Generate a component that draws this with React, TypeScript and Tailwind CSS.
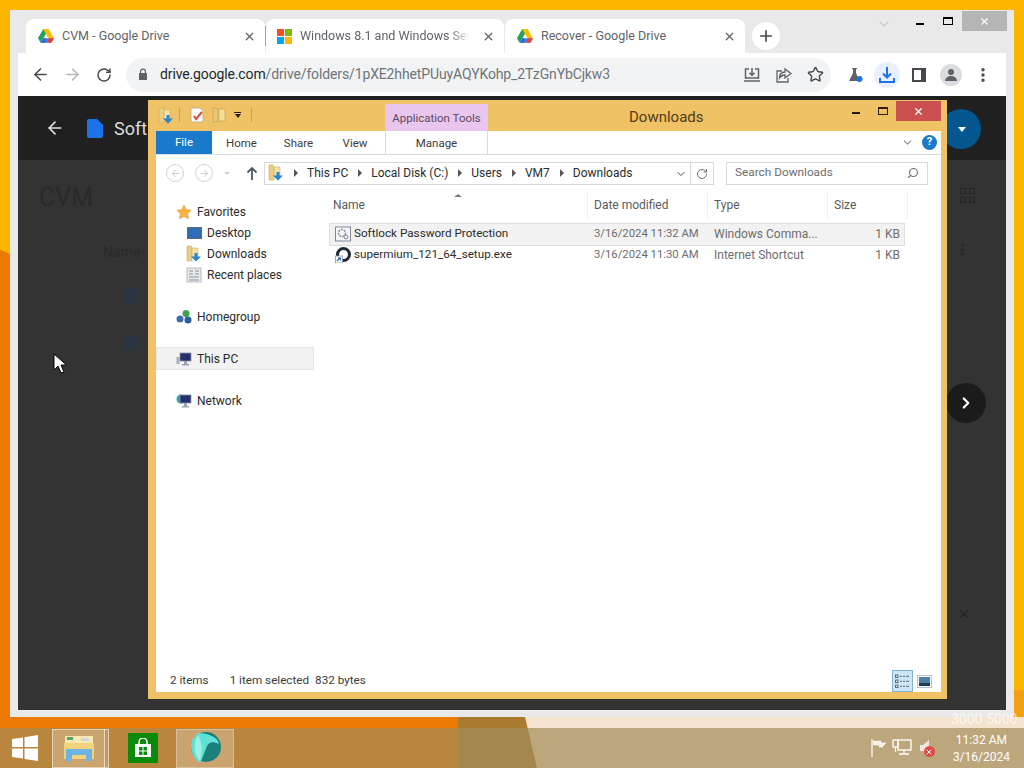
import { ArrowLeft, ArrowRight, ChevronDown, ChevronRight, EllipsisVertical, MoreVertical, Plus, RotateCw, Search, Star, X } from 'lucide-react';

function DriveLogo() {
  return (
    <svg width="16" height="14" viewBox="0 0 16 14" className="shrink-0">
      <path d="M5.3 0h5.4l-2.7 4.7L5.5 9H0.2z" fill="#fbbc04" />
      <path d="M5.3 0L0 9.2l2.6 4.5L8 4.6z" fill="#1ea362" />
      <path d="M10.7 0H5.3L8 4.7l2.6 4.5H16z" fill="#fbbc04" />
      <path d="M2.6 13.8h10.8L16 9.2H5.3z" fill="#4285f4" />
      <path d="M5.3 9.2L2.6 13.8h5.2l-.1-4.6z" fill="#3367d6" />
      <path d="M13.4 13.8L16 9.2h-5.4l-1.5 4.6z" fill="#ea4335" />
    </svg>
  );
}

function MsLogo() {
  return (
    <div className="grid grid-cols-2 gap-[1px] w-[15px] h-[15px] shrink-0">
      <div className="bg-[#f25022]" />
      <div className="bg-[#7fba00]" />
      <div className="bg-[#00a4ef]" />
      <div className="bg-[#ffb900]" />
    </div>
  );
}

function FolderDown() {
  return (
    <svg width="16" height="17" viewBox="0 0 16 17" className="shrink-0">
      <path d="M1 1h4l1 1v14H1z" fill="#e9cf86" stroke="#c9a85a" strokeWidth="0.6" />
      <path d="M6 3h6v9H6z" fill="#f6e3a6" stroke="#cfb26a" strokeWidth="0.6" />
      <path d="M8.500 8h3v3.500H15l-5 5-5-5h3.500z" fill="#2a85cf" />
    </svg>
  );
}

function Tab({ icon, title, textCls, width, pad }: { icon: React.ReactNode; title: string; textCls: string; width: string; pad: string }) {
  return (
    <div className={`flex items-center h-[34px] bg-white rounded-t-lg ${pad} ${width}`}>
      {icon}
      <span className={`ml-2 text-[12.5px] text-[#5f6368] whitespace-nowrap overflow-hidden ${textCls}`}>{title}</span>
      <X size={13} strokeWidth={2.4} className="text-[#5f6368] ml-auto mr-[9px] shrink-0" />
    </div>
  );
}

function ChromeWindow() {
  return (
    <div className="absolute left-[10px] top-[10px] w-[1004px] h-[707px] bg-[#e9e9e9] flex flex-col px-2 pb-[7px] font-['Roboto',sans-serif]">
      <div className="relative h-[43px] flex items-end pl-2 shrink-0">
        <Tab icon={<DriveLogo />} title="CVM - Google Drive" textCls="w-[180px]" width="w-[239px]" pad="pl-3" />
        <div className="w-[1px] h-[20px] bg-[#9aa0a6] self-center mt-[9px]" />
        <Tab
          icon={<MsLogo />}
          title="Windows 8.1 and Windows Server"
          textCls="w-[170px] [mask-image:linear-gradient(to_right,black_88%,transparent)]"
          width="w-[238px]"
          pad="pl-[11px]"
        />
        <div className="w-[1px]" />
        <Tab icon={<DriveLogo />} title="Recover - Google Drive" textCls="w-[180px]" width="w-[240px]" pad="pl-3" />
        <div className="ml-[7px] mb-[3px] w-[28px] h-[28px] rounded-full bg-white flex items-center justify-center">
          <Plus size={18} strokeWidth={2.2} className="text-[#45494d]" />
        </div>
        <ChevronDown size={16} strokeWidth={1} className="absolute left-[858px] top-[6px] text-[#9b9b9b]" />
        <div className="absolute left-[898px] top-[13px] w-[8px] h-[2px] bg-black" />
        <div className="absolute left-[925px] top-[7px] w-[10px] h-[8px] border border-black border-t-2" />
        <div className="absolute left-[944px] top-[1px] w-[45px] h-[20px] bg-[#b5b5b5] flex items-center justify-center">
          <X size={11} strokeWidth={2.4} className="text-white" />
        </div>
      </div>

      <div className="h-[43px] bg-white flex items-center shrink-0 pl-[13px] text-[#5f6368]">
        <ArrowLeft size={19} strokeWidth={2} className="text-[#45494d]" />
        <ArrowRight size={19} strokeWidth={2} className="ml-[13px] text-[#b5b8bb]" />
        <RotateCw size={16} strokeWidth={2.2} className="ml-[14px] text-[#45494d]" />
        <div className="ml-[14px] w-[705px] h-[34px] rounded-full bg-[#f1f3f4] flex items-center pl-[12px]">
          <svg width="10" height="13" viewBox="0 0 10 13" className="shrink-0">
            <path d="M2 5V3.5a3 3 0 016 0V5h1v7H1V5zM3.2 5h3.600V3.5a1.800 1.800 0 00-3.600 0z" fill="#5f6368" />
          </svg>
          <span className="ml-[12px] text-[14px] whitespace-nowrap tracking-[-0.13px] text-[#70757a]">
            <span className="text-[#26282b]">drive.google.com</span>/drive/folders/1pXE2hhetPUuyAQYKohp_2TzGnYbCjkw3
          </span>
          <div className="ml-auto flex items-center gap-[14px] pr-[7px]">
            <svg width="18" height="18" viewBox="0 0 18 18" fill="none" stroke="#5f6368" strokeWidth="1.500">
              <path d="M6 3H2.500v9h13V3H12M9 2v7M6.500 6.800L9 9.300l2.500-2.500M1 15h16" />
            </svg>
            <svg width="18" height="18" viewBox="0 0 18 18" fill="none" stroke="#5f6368" strokeWidth="1.300">
              <path d="M7 5H2v11h11v-4M10 3v3C6 6 4.500 9 4.500 12c1.500-2.500 3-3 5.500-3v3l6-4.500z" />
            </svg>
            <Star size={17} strokeWidth={2} className="text-[#45494d]" />
          </div>
        </div>
        <div className="ml-[16px] flex items-center">
          <svg width="16" height="16" viewBox="0 0 16 16" className="shrink-0">
            <path d="M5 1h5v1H9v4l4 8H2l4-8V2H5z" fill="#5f6368" />
            <circle cx="12.500" cy="12" r="3" fill="#1a73e8" />
          </svg>
          <div className="ml-[11px] w-[26px] h-[26px] rounded-full bg-[#e8f0fe] flex items-center justify-center">
            <svg width="18" height="18" viewBox="0 0 18 18" fill="none" stroke="#1a73e8" strokeWidth="2">
              <path d="M9 1v10M5 7.500l4 4 4-4M2 12v4h14v-4" />
            </svg>
          </div>
          <div className="ml-[12px] w-[14px] h-[14px] border-2 border-[#45494d] border-r-[5px]" />
          <div className="ml-[14px] w-[22px] h-[22px] rounded-full bg-[#dadce0] flex items-center justify-center">
            <svg width="14" height="14" viewBox="0 0 14 14" fill="#5f6368">
              <circle cx="7" cy="4" r="3" />
              <path d="M1 13c0-3 3-5 6-5s6 2 6 5z" />
            </svg>
          </div>
          <MoreVertical size={18} strokeWidth={2.6} className="ml-[12px] text-[#45494d]" />
        </div>
      </div>

      <div className="relative flex-1 bg-[#333333] overflow-hidden">
        <div className="h-[64px] bg-[#202020] flex items-center pl-[27px]">
          <ArrowLeft size={20} strokeWidth={2} className="text-[#e0e0e0]" />
          <svg width="16" height="19" viewBox="0 0 16 19" className="ml-[22px]">
            <path d="M2 0h8l6 6v11a2 2 0 01-2 2H2a2 2 0 01-2-2V2a2 2 0 012-2z" fill="#1a73e8" />
          </svg>
          <span className="ml-[11px] text-[18px] text-[#dadada]">Soft</span>
          <div className="absolute left-[923px] top-[13px] w-[40px] h-[40px] rounded-full bg-[#04568f] flex items-center justify-center">
            <div className="ml-[2px] border-x-[4px] border-x-transparent border-t-[5px] border-t-white" />
          </div>
        </div>
        <div className="absolute left-[21px] top-[83px] text-[25px] text-[#2a2a2a]">CVM</div>
        <div className="absolute left-[85px] top-[146px] text-[14px] text-[#2a2a2a]">Name</div>
        <div className="absolute left-[106px] top-[192px] w-[13px] h-[15px] bg-[#2a3340]" />
        <div className="absolute left-[106px] top-[239px] w-[14px] h-[15px] bg-[#2a3340]" />
        <div className="absolute left-[942px] top-[92px] grid grid-cols-2 gap-[3px] w-[15px]">
          <div className="h-[6px] border border-[#252525]" />
          <div className="h-[6px] border border-[#252525]" />
          <div className="h-[6px] border border-[#252525]" />
          <div className="h-[6px] border border-[#252525]" />
        </div>
        <EllipsisVertical size={15} strokeWidth={2} className="absolute left-[937px] top-[146px] text-[#252525]" />
        <div className="absolute left-[928px] top-[287px] w-[40px] h-[40px] rounded-full bg-[#1b1b1b] flex items-center justify-center">
          <ChevronRight size={18} strokeWidth={3} className="text-white" />
        </div>
        <X size={14} strokeWidth={2} className="absolute left-[939px] top-[511px] text-[#242424]" />
      </div>
    </div>
  );
}

function SidebarRow({ icon, label, indent, selected, gap }: { icon: React.ReactNode; label: string; indent?: boolean; selected?: boolean; gap?: boolean }) {
  return (
    <div
      className={`flex items-center h-[21px] w-[156px] ml-[1px] ${indent ? 'pl-[29px]' : 'pl-[19px]'} ${gap ? 'mt-[21px]' : ''} ${
        selected ? 'bg-[#f2f2f2] outline outline-[#e5e5e5]' : ''
      }`}
    >
      <div className="w-[16px] h-[16px] flex items-center justify-center shrink-0">{icon}</div>
      <span className="ml-[5px] text-[12px] text-[#2b2b2b]">{label}</span>
    </div>
  );
}

function NetPc({ globe }: { globe?: boolean }) {
  return (
    <svg width="16" height="16" viewBox="0 0 16 16">
      {globe && <circle cx="5" cy="6" r="4.500" fill="#3aa0a8" />}
      <rect x="4" y="2" width="11" height="8" fill="#26306e" stroke="#8b93a6" strokeWidth="0.800" />
      <rect x="8" y="10" width="3" height="3" fill="#9aa3b2" />
      <rect x="6" y="13" width="7" height="1.500" fill="#9aa3b2" />
      {!globe && <rect x="0.500" y="6" width="3" height="7" fill="#a9afba" />}
    </svg>
  );
}

const files = [
  { name: 'Softlock Password Protection', date: '3/16/2024 11:32 AM', type: 'Windows Comma...', size: '1 KB', selected: true, icon: 'cmd' },
  { name: 'supermium_121_64_setup.exe', date: '3/16/2024 11:30 AM', type: 'Internet Shortcut', size: '1 KB', selected: false, icon: 'link' },
];

function FileIcon({ kind }: { kind: string }) {
  if (kind === 'cmd') {
    return (
      <svg width="16" height="16" viewBox="0 0 16 16" fill="none" className="shrink-0">
        <rect x="0.500" y="1" width="15" height="14" fill="#f4f6f8" stroke="#7d8794" />
        <circle cx="7" cy="7" r="3.500" stroke="#7d8794" strokeWidth="1.400" strokeDasharray="2 1" />
        <circle cx="11" cy="11" r="2" stroke="#7d8794" />
      </svg>
    );
  }
  return (
    <svg width="16" height="16" viewBox="0 0 16 16" className="shrink-0">
      <circle cx="8.500" cy="7.500" r="6" fill="none" stroke="#1d2a33" strokeWidth="3" />
      <rect x="0.500" y="9" width="7" height="7" fill="#fff" stroke="#8a97a8" strokeWidth="0.800" />
      <path d="M2 14l3-3M3 11h2.500v2.500" stroke="#2563a8" strokeWidth="1.100" fill="none" />
    </svg>
  );
}

function Crumb() {
  return <div className="ml-[10px] border-y-[4px] border-y-transparent border-l-[4px] border-l-[#555] shrink-0" />;
}

function Explorer() {
  return (
    <div className="absolute left-[148px] top-[100px] w-[799px] h-[599px] bg-[#efc265] flex flex-col pl-[8px] pr-[6px] pb-[7px] font-['Roboto',sans-serif]">
      <div className="relative h-[31px] shrink-0 flex items-center pl-[2px] pb-[1px]">
        <FolderDown />
        <div className="ml-[5px] w-[1px] h-[14px] bg-[#c9a24e]" />
        <svg width="15" height="16" viewBox="0 0 15 16" className="ml-[10px]">
          <path d="M1 1h9l3 3v11H1z" fill="#fbfbfb" stroke="#c0a88a" strokeWidth="0.800" />
          <path d="M4 9l2 3 6-7" stroke="#d9503c" strokeWidth="2" fill="none" />
        </svg>
        <svg width="15" height="16" viewBox="0 0 15 16" className="ml-[7px]">
          <path d="M1 1h5v14H1z" fill="#e3c777" stroke="#bfa052" strokeWidth="0.600" />
          <path d="M7 2h6v12H7z" fill="#f2dd99" stroke="#bfa052" strokeWidth="0.600" />
        </svg>
        <div className="ml-[7px] flex flex-col items-center gap-[1px]">
          <div className="w-[7px] h-[1px] bg-[#2b1b00]" />
          <div className="border-x-[3.5px] border-x-transparent border-t-[4px] border-t-[#2b1b00]" />
        </div>
        <div className="ml-[10px] w-[1px] h-[14px] bg-[#c9a24e]" />
        <div className="absolute left-[229px] top-[4px] w-[103px] h-[27px] pt-[2px] bg-[#e9c6ee] flex items-center justify-center text-[11.5px] text-[#5b4a5e]">Application Tools</div>
        <div className="absolute left-[473px] top-[6px] text-[15px] text-[#4f3d16]">Downloads</div>
        <div className="absolute left-[696px] top-[12px] w-[8px] h-[2px] bg-[#2b1b00]" />
        <div className="absolute left-[722px] top-[7px] w-[10px] h-[8px] border border-[#2b1b00] border-t-2" />
        <div className="absolute left-[740px] top-[1px] w-[45px] h-[20px] bg-[#c9504f] flex items-center justify-center">
          <X size={11} strokeWidth={2.600} className="text-white" />
        </div>
      </div>

      <div className="flex-1 bg-white flex flex-col min-h-0">
        <div className="h-[24px] flex items-stretch border-b border-[#dadbdc] text-[11.5px] text-[#3c3c3c] shrink-0">
          <div className="w-[56px] bg-[#1979ca] text-white flex items-center justify-center pt-[1px]">File</div>
          <div className="w-[57px] flex items-center justify-center ml-[1px] pt-[3px]">Home</div>
          <div className="w-[57px] flex items-center justify-center pt-[3px]">Share</div>
          <div className="w-[57px] flex items-center justify-center pt-[3px] pr-[1px]">View</div>
          <div className="w-[103px] ml-[1px] flex items-center justify-center border-x border-[#dadbdc] pt-[3px]">Manage</div>
          <ChevronDown size={13} strokeWidth={2} className="self-center ml-auto text-[#7f8a97]" />
          <div className="ml-[8px] mr-[4px] self-center w-[15px] h-[15px] rounded-full bg-[#1c78c8] text-white text-[11px] font-bold flex items-center justify-center">?</div>
        </div>

        <div className="h-[36px] flex items-start pt-[7px] shrink-0">
          <div className="w-[108px] flex items-center pl-[10px] h-[22px]">
            <div className="w-[18px] h-[18px] rounded-full border border-[#cfd3d8] flex items-center justify-center">
              <ArrowLeft size={11} strokeWidth={2} className="text-[#c3c8ce]" />
            </div>
            <div className="ml-[11px] w-[18px] h-[18px] rounded-full border border-[#cfd3d8] flex items-center justify-center">
              <ArrowRight size={11} strokeWidth={2} className="text-[#c3c8ce]" />
            </div>
            <div className="ml-[11px] border-x-[3px] border-x-transparent border-t-[3px] border-t-[#d2d2d2]" />
            <svg width="12" height="14" viewBox="0 0 12 14" fill="none" stroke="#4d5a66" strokeWidth="1.800" className="ml-[16px]">
              <path d="M6 14V2M1.500 6.500L6 2l4.500 4.500" />
            </svg>
          </div>
          <div className="w-[450px] h-[23px] border border-[#d9d9d9] flex items-center text-[12px] text-[#2b2b2b]">
            <div className="w-[426px] flex items-center pl-[3px] pb-[2px] border-r border-[#d9d9d9] h-full">
              <FolderDown />
              <Crumb />
              <span className="ml-[9px]">This PC</span>
              <Crumb />
              <span className="ml-[9px]">Local Disk (C:)</span>
              <Crumb />
              <span className="ml-[9px]">Users</span>
              <Crumb />
              <span className="ml-[9px]">VM7</span>
              <Crumb />
              <span className="ml-[9px]">Downloads</span>
              <ChevronDown size={12} strokeWidth={2} className="ml-auto mr-[3px] mt-[2px] text-[#4a4a4a]" />
            </div>
            <div className="flex-1 flex items-center justify-center">
              <RotateCw size={12} strokeWidth={2} className="text-[#6f6f6f]" />
            </div>
          </div>
          <div className="ml-[12px] w-[202px] h-[23px] border border-[#d9d9d9] flex items-center pl-[8px] pr-[8px] pb-[1px] text-[11.8px] text-[#6d6d6d]">
            Search Downloads
            <Search size={12} strokeWidth={2.200} className="ml-auto text-[#6f6f6f] -scale-x-100" />
          </div>
        </div>

        <div className="flex-1 flex min-h-0 relative">
          <div className="w-[174px] pt-[10px] shrink-0">
            <SidebarRow
              label="Favorites"
              icon={<svg width="16" height="16" viewBox="0 0 16 16"><path d="M8 1l2.200 4.600 5 .7-3.600 3.500.9 5L8 12.400 3.500 14.800l.9-5L.8 6.300l5-.7z" fill="#f5b545" stroke="#d98a2b" strokeWidth="0.500" /></svg>}
            />
            <SidebarRow indent label="Desktop" icon={<div className="w-[15px] h-[12px] bg-[#2f6db5] border border-[#5d6b7d]" />} />
            <SidebarRow indent label="Downloads" icon={<FolderDown />} />
            <SidebarRow
              indent
              label="Recent places"
              icon={<svg width="16" height="16" viewBox="0 0 16 16"><rect x="1" y="1" width="14" height="14" fill="#e8eaec" stroke="#a9b0b8" strokeWidth="0.800" /><path d="M3 4h4M3 7h4M3 10h10M9 4h4M9 7h4M3 13h10" stroke="#8a929c" /></svg>}
            />
            <SidebarRow
              gap
              label="Homegroup"
              icon={<svg width="16" height="16" viewBox="0 0 16 16"><circle cx="4" cy="10" r="3.500" fill="#3d6cb3" /><circle cx="10" cy="4.500" r="3.500" fill="#3fa34d" /><circle cx="12" cy="11" r="3.500" fill="#2b5e9e" /></svg>}
            />
            <SidebarRow gap selected label="This PC" icon={<NetPc />} />
            <SidebarRow gap label="Network" icon={<NetPc globe />} />
          </div>

          <div className="flex-1 min-w-0 relative">
            <div className="absolute left-[124px] top-[3px] border-x-[4px] border-x-transparent border-b-[3px] border-b-[#7a7a7a]" />
            <div className="w-[578px] h-[28px] mb-[5px] grid grid-cols-[258px_120px_120px_80px] items-center text-[12px] text-[#5a5a5a]">
              <div className="pl-[3px] h-full flex items-center border-r border-[#f1f1f1]">Name</div>
              <div className="pl-[6px] h-full flex items-center border-r border-[#f1f1f1]">Date modified</div>
              <div className="pl-[6px] h-full flex items-center border-r border-[#f1f1f1]">Type</div>
              <div className="pl-[6px] h-full flex items-center border-r border-[#f1f1f1]">Size</div>
            </div>
            {files.map((f) => (
              <div
                key={f.name}
                className={`w-[574px] h-[21px] grid grid-cols-[258px_120px_120px_76px] items-center text-[12px] text-[#6d6d6d] ${
                  f.selected ? 'bg-[#f2f2f2] outline outline-[#dedede]' : ''
                }`}
              >
                <div className="pl-[5px] flex items-center text-[#2b2b2b] whitespace-nowrap">
                  <FileIcon kind={f.icon} />
                  <span className="ml-[3px] text-[11.7px] pb-[1px]">{f.name}</span>
                </div>
                <div className="pl-[6px] pb-[1px] whitespace-nowrap text-[11.3px]">{f.date}</div>
                <div className="pl-[6px] pb-[1px] whitespace-nowrap">{f.type}</div>
                <div className="pr-[4px] pb-[1px] text-right">{f.size}</div>
              </div>
            ))}
          </div>
        </div>

        <div className="h-[22px] shrink-0 flex items-center pl-[14px] text-[11.7px] text-[#3c3c3c]">
          <span>2 items</span>
          <span className="ml-[21px]">1 item selected</span>
          <span className="ml-[6px]">832 bytes</span>
          <div className="ml-auto mr-[6px] flex items-center gap-[1px]">
            <div className="w-[21px] h-[22px] bg-[#cde6f7] border border-[#7fb4cf] flex items-center justify-center">
              <svg width="15" height="15" viewBox="0 0 15 15" fill="none" stroke="#5a6b7a">
                <rect x="0.500" y="1" width="2.500" height="2.500" />
                <rect x="0.500" y="6" width="2.500" height="2.500" />
                <rect x="0.500" y="11" width="2.500" height="2.500" />
                <path d="M5 2.300h2M8 2.300h2M11 2.300h3M5 7.300h2M8 7.300h2M11 7.300h3M5 12.300h2M8 12.300h2M11 12.300h3" />
              </svg>
            </div>
            <div className="w-[21px] h-[22px] flex items-center justify-center">
              <svg width="15" height="13" viewBox="0 0 15 13">
                <rect x="0.500" y="0.500" width="14" height="12" fill="#f5f7f9" stroke="#b7c2cc" />
                <rect x="2" y="2" width="11" height="6" fill="#4f7ea3" />
                <rect x="2" y="8" width="11" height="3" fill="#1e3c55" />
              </svg>
            </div>
          </div>
        </div>
      </div>
    </div>
  );
}

function Taskbar() {
  return (
    <div className="relative mt-auto h-[40px] bg-[#a48b58]/70 flex items-center font-['Roboto',sans-serif]">
      <svg width="26" height="26" viewBox="0 0 26 26" fill="#fff" className="ml-[12px]">
        <path d="M0 4l11-1.500V12H0zM12.500 2.300L26 0v12H12.500zM0 13.500h11v10L0 22zM12.500 13.500H26V26l-13.500-2z" />
      </svg>
      <div className="ml-[14px] h-[39px] w-[53px] bg-white/25 border border-white/50 flex items-center justify-center relative">
        <svg width="32" height="28" viewBox="0 0 32 28">
          <path d="M2 2h28v8H2z" fill="#f7e9b0" />
          <path d="M4 3h6v3H4z" fill="#5aa469" />
          <path d="M18 4h8v3h-8z" fill="#cfd8dc" />
          <path d="M1 9h30v16H1z" fill="#f2d27a" />
          <path d="M3 15h26v12h-6v-6H9v6H3z" fill="#6db4e6" />
        </svg>
        <div className="absolute -right-[5px] top-[-1px] h-[39px] w-[5px] border border-l-0 border-white/50 bg-white/15" />
      </div>
      <div className="ml-[23px] w-[30px] h-[30px] bg-[#0a8a0a] flex items-center justify-center">
        <svg width="18" height="20" viewBox="0 0 18 20">
          <path d="M5 6V4a4 4 0 018 0v2" stroke="#fff" strokeWidth="1.500" fill="none" />
          <path d="M1 6h16v13H1z" fill="#fff" />
          <path d="M5 9h3.500v3.500H5zM9.500 9H13v3.500H9.500zM5 13.500h3.500V17H5zM9.500 13.500H13V17H9.500z" fill="#0a8a0a" />
        </svg>
      </div>
      <div className="ml-[18px] h-[39px] w-[58px] bg-white/25 border border-white/30 flex items-center justify-center">
        <svg width="34" height="34" viewBox="0 0 34 34">
          <circle cx="18" cy="16" r="15" fill="#1b7f7a" />
          <path d="M10 2c10 0 20 4 21 11-6-3-10-2-12 2-2 5-4 11-7 17C5 26 1 18 4 9z" fill="#5ee0d4" />
          <path d="M10 4C5 12 6 24 12 30 15 22 14 10 10 4z" fill="#9cf0e4" />
        </svg>
      </div>
      <div className="ml-auto flex items-center pr-[14px]">
        <svg width="18" height="20" viewBox="0 0 18 20" fill="none" stroke="#fff" strokeWidth="1.200">
          <path d="M2 1v18" />
          <path d="M3 3h8v2h5l-3 3 0 1H9V7H3z" fill="#f5f0e0" strokeWidth="0.500" />
        </svg>
        <svg width="20" height="20" viewBox="0 0 20 20" fill="none" stroke="#fff" strokeWidth="1.300" className="ml-[4px]">
          <rect x="6" y="2" width="13" height="10" />
          <rect x="1" y="2" width="5" height="7" />
          <path d="M12 12v3M7 16h10M3.500 9v5" />
        </svg>
        <div className="relative ml-[7px] w-[16px] h-[18px]">
          <svg width="12" height="18" viewBox="0 0 12 18" fill="#fff">
            <path d="M1 6h3l6-5v16l-6-5H1z" fillOpacity="0.750" />
          </svg>
          <div className="absolute right-0 bottom-0 w-[11px] h-[11px] rounded-full bg-[#e24a4a] flex items-center justify-center">
            <X size={8} strokeWidth={3} className="text-white" />
          </div>
        </div>
        <div className="ml-[18px] flex flex-col items-center text-white text-[12px] leading-[17px] mt-[1px]">
          <span>11:32 AM</span>
          <span>3/16/2024</span>
        </div>
      </div>
    </div>
  );
}

export default function App() {
  return (
    <div className="relative w-[1024px] h-[768px] overflow-hidden flex flex-col">
      <svg width="1024" height="768" viewBox="0 0 1024 768" className="absolute inset-0">
        <rect width="1024" height="768" fill="#fdb500" />
        <path d="M0 250 C6 252 12 255 20 262 V717 H1024 V768 H0z" fill="#e96f00" />
        <path d="M0 250 V768 H458 V710 H20 V262 C12 255 6 252 0 250z" fill="#ec7a05" />
        <path d="M458 717h67l12 51h-79z" fill="#a97a30" />
        <path d="M525 717h499v51H537z" fill="#f3e3cf" />
        <path d="M1008 690h16v27h-16z" fill="#f0a010" />
      </svg>
      <ChromeWindow />
      <Explorer />
      <div className="absolute left-[951px] top-[709px] text-[14px] text-white/70 font-['Roboto',sans-serif]">3000 5000</div>
      <svg width="14" height="21" viewBox="0 0 14 21" className="absolute left-[53px] top-[353px]">
        <path d="M1 1v16l4-4 3 7 3-1-3-7h5.500z" fill="#fff" stroke="#000" strokeWidth="1" />
      </svg>
      <Taskbar />
    </div>
  );
}
